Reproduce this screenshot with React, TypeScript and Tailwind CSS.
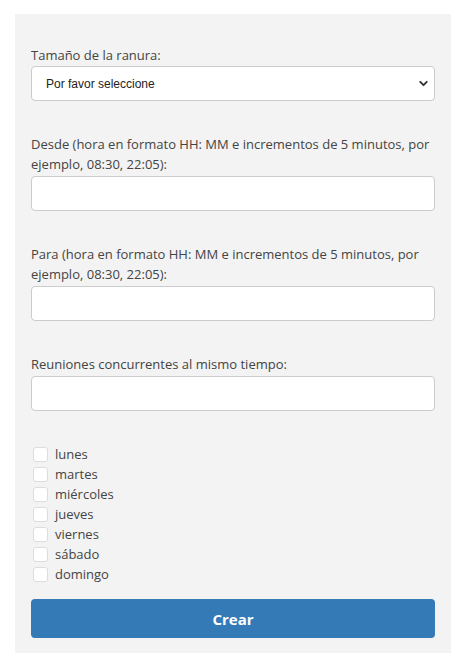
import { ChevronDown } from "lucide-react";

const days = ["lunes", "martes", "miércoles", "jueves", "viernes", "sábado", "domingo"];

export default function App() {
  return (
    <div className="min-h-screen bg-white pt-[14px] font-['Open_Sans',sans-serif] text-[13px] leading-5 text-[#444]">
      <form className="ml-[15px] w-[436px] bg-[#f3f3f3] px-4 pt-[31px] pb-[15px]">
        <label className="mb-px block">Tamaño de la ranura:</label>
        <div className="relative">
          <select className="h-[35px] w-full appearance-none rounded border border-[#ccc] bg-white pl-[14px] font-['Liberation_Sans',sans-serif] text-[12px] text-[#222] outline-none">
            <option>Por favor seleccione</option>
          </select>
          <ChevronDown className="pointer-events-none absolute right-[5px] top-[11px] h-[13px] w-[13px] text-[#333]" strokeWidth={3.5} />
        </div>

        <label className="mt-[33px] mb-[2px] block">
          Desde (hora en formato HH: MM e incrementos de 5 minutos, por ejemplo, 08:30, 22:05):
        </label>
        <input className="block h-[35px] w-full rounded border border-[#ccc] bg-white outline-none" />

        <label className="mt-[33px] mb-[2px] block">
          Para (hora en formato HH: MM e incrementos de 5 minutos, por ejemplo, 08:30, 22:05):
        </label>
        <input className="block h-[35px] w-full rounded border border-[#ccc] bg-white outline-none" />

        <label className="mt-[33px] mb-[2px] block">Reuniones concurrentes al mismo tiempo:</label>
        <input className="block h-[35px] w-full rounded border border-[#ccc] bg-white outline-none" />

        <div className="mt-[33px] flex flex-col">
          {days.map((d) => (
            <label key={d} className="flex h-5 items-center">
              <span className="ml-[2px] h-[15px] w-[15px] rounded-[3px] border border-[#ddd] bg-white" />
              <span className="ml-[7px]">{d}</span>
            </label>
          ))}
        </div>

        <button
          type="button"
          className="mt-[15px] h-[39px] w-full rounded bg-[#337ab7] text-[15px] font-bold text-white"
        >
          Crear
        </button>
      </form>
    </div>
  );
}
